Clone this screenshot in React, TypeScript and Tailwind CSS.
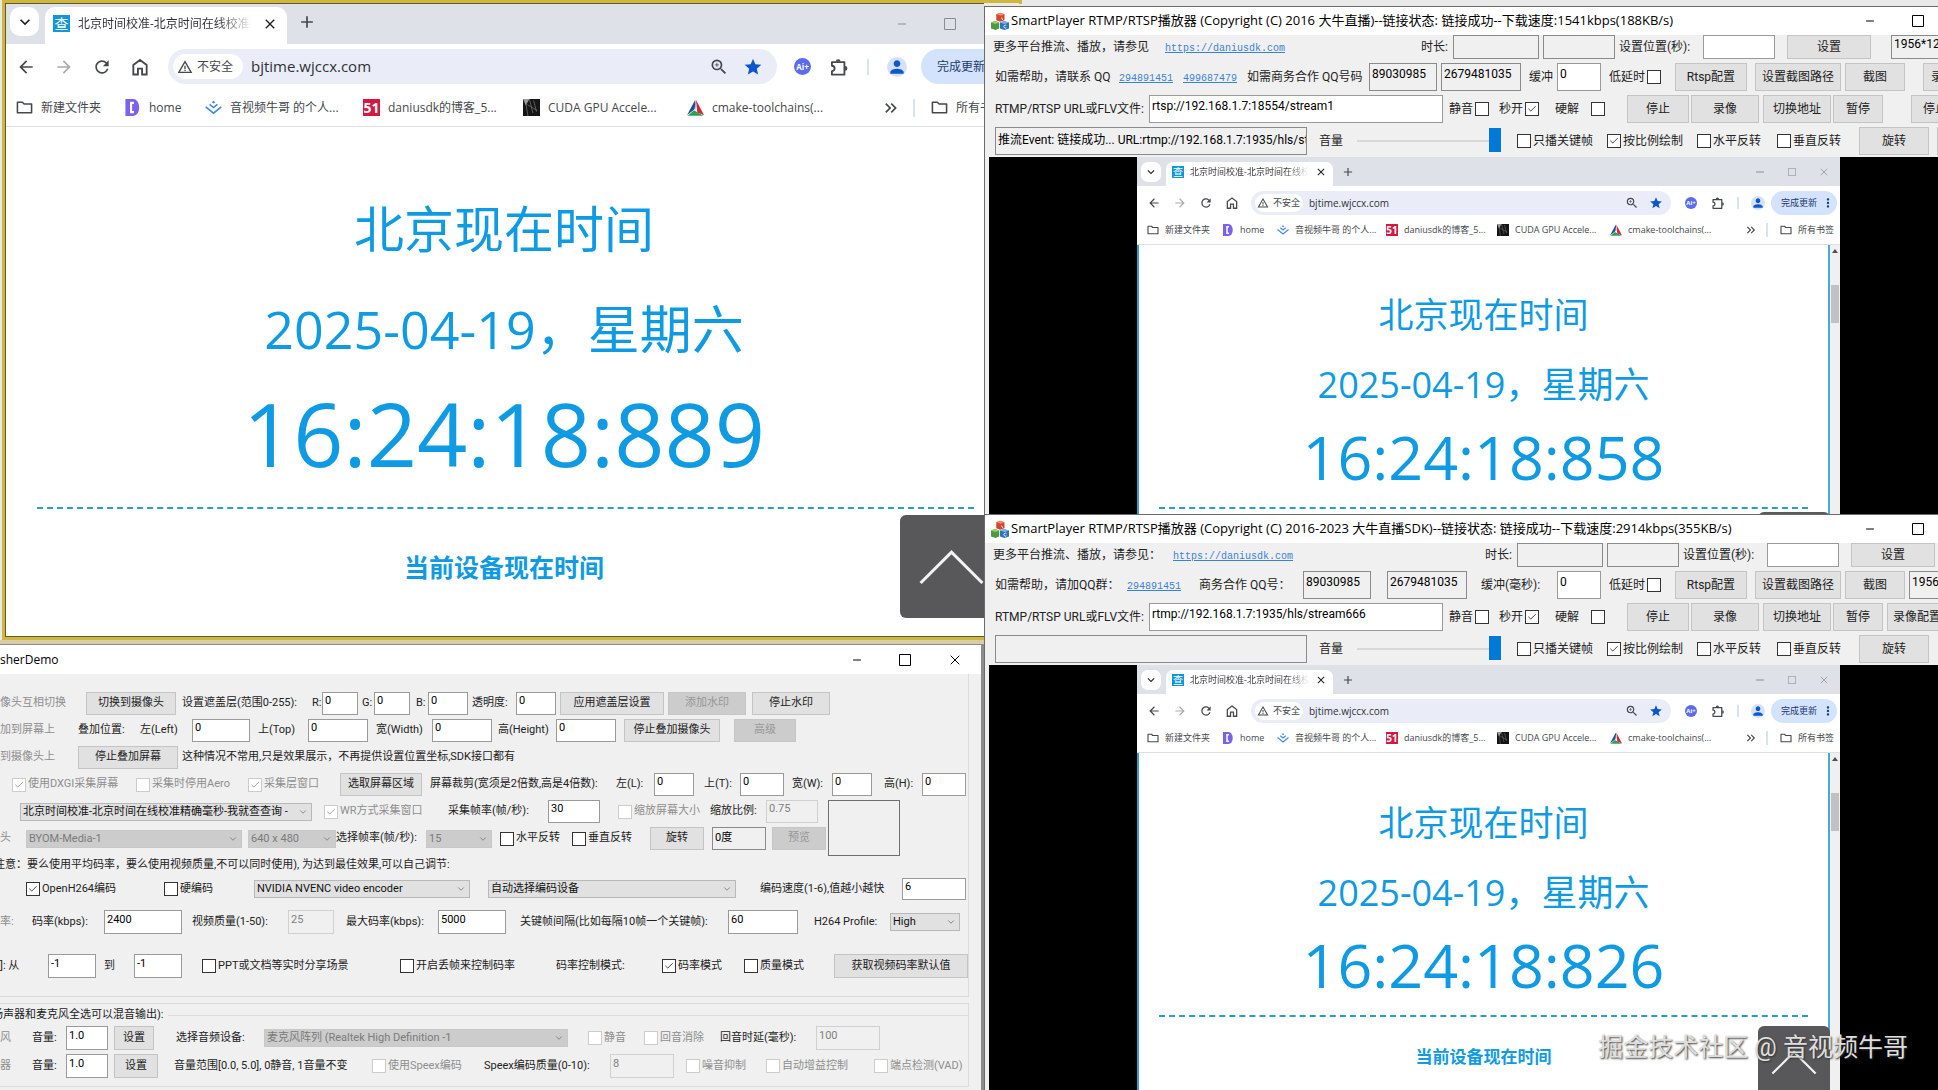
import type { ReactNode } from "react";
import clsx from "clsx";
import { Check, ChevronDown, Minus, X } from "lucide-react";
import {
  MdAdd,
  MdArrowBack,
  MdArrowForward,
  MdClose,
  MdKeyboardArrowDown,
  MdKeyboardDoubleArrowRight,
  MdMoreVert,
  MdPerson,
  MdRefresh,
  MdStar,
  MdWarningAmber,
  MdZoomIn,
} from "react-icons/md";

/* ---------- icons ---------- */

function MaxIcon({ className }: { className?: string }) {
  return (
    <svg className={className} viewBox="0 0 12 12" fill="none" stroke="currentColor">
      <path d="M.5.5h11v11H.5z" />
    </svg>
  );
}

function HomeIcon({ className }: { className?: string }) {
  return (
    <svg className={className} viewBox="0 0 24 24" fill="none" stroke="currentColor" strokeWidth={2.2}>
      <path d="M4 21V9.5L12 3.5l8 6V21h-5.5v-7h-5v7z" />
    </svg>
  );
}

function ExtensionIcon({ className }: { className?: string }) {
  return (
    <svg className={className} viewBox="0 0 24 24" fill="none" stroke="currentColor" strokeWidth={2.2}>
      <path d="M3.5 6.2h15v15h-15v-4.3a3.2 3.2 0 0 0 0-6.4z" strokeLinejoin="round" />
      <path d="M8.2 5.4a2.8 2.8 0 0 1 5.6 0zM19.3 10.9a2.8 2.8 0 0 1 0 5.6z" fill="currentColor" stroke="none" />
    </svg>
  );
}

function FolderIcon({ className }: { className?: string }) {
  return (
    <svg className={className} viewBox="0 0 24 24" fill="none" stroke="currentColor" strokeWidth={2.2}>
      <path d="M2 19.5v-15h7l2.5 2.5H22v12.5z" strokeLinejoin="round" />
    </svg>
  );
}

function PurpleIcon({ className }: { className?: string }) {
  return (
    <svg className={className} viewBox="0 0 24 24">
      <path d="M2 0h11a8.5 12 0 0 1 0 24H2z" fill="#7b61f0" />
      <path d="M14 5.5h-4v13h4" fill="none" stroke="#fff" strokeWidth={3} />
    </svg>
  );
}

function JuejinIcon({ className }: { className?: string }) {
  return (
    <svg className={className} viewBox="0 0 24 24" fill="none" stroke="#3f86f7" strokeWidth={2.2}>
      <path d="M12 2.5l2.5 2-2.5 2-2.5-2z" fill="#3f86f7" stroke="none" />
      <path d="M6.5 7.5L12 12l5.5-4.5M1 11l11 9 11-9" />
    </svg>
  );
}

function CmakeIcon({ className }: { className?: string }) {
  return (
    <svg className={className} viewBox="0 0 24 24">
      <path d="M11.6 1L0 23l12.5-10z" fill="#1f4f9c" />
      <path d="M12.6 1L24 23l-9.5-4z" fill="#d0283a" />
      <path d="M1 23.5l9-7.5 13 7.5z" fill="#2f9e4f" />
      <path d="M11.9 6l.6 8.5 2.5 3-4.5-1.5z" fill="#dfe6ee" />
    </svg>
  );
}

function CudaIcon({ className }: { className?: string }) {
  return (
    <svg className={className} viewBox="0 0 24 24">
      <path d="M0 0h24v24H0z" fill="#151515" />
      <path d="M3 0l4 24M9 0l5 20M15 2l4 16M6 8l14 8" stroke="#777" strokeWidth={1} />
      <path d="M0 0h9L4 9z" fill="#9a9a9a" />
    </svg>
  );
}

function MfcIcon() {
  return (
    <svg className="size-4.5 shrink-0" viewBox="0 0 24 24">
      <path d="M7 3l5-2 6 2v8l-6 2-5-2z" fill="#d4472f" />
      <path d="M12 1l6 2-5 2-6-2z" fill="#f08a6c" />
      <path d="M0 14l5-2 6 2v8l-5 2-6-2z" fill="#4f9a3c" />
      <path d="M5 12l6 2-5 2-6-2z" fill="#93cf74" />
      <path d="M12 14l5-2 7 2v8l-6 2-6-2z" fill="#2e72b8" />
      <path d="M17 12l7 2-6 2-6-2z" fill="#7fb4e6" />
      <path d="M14 7.5l1.5 3M20.5 18a2 2 0 1 0 0 3" stroke="#fff" fill="none" strokeWidth={1.2} />
    </svg>
  );
}

/* ---------- browser window ---------- */

const BIG = {
  strip: "h-10 pl-1 pt-[3px]",
  menu: "size-[29px] rounded-[10px]",
  menuIcon: "size-5",
  tab: "ml-1.5 w-[242px] rounded-t-[10px] pl-2 pr-2 pb-1",
  fav: "size-[17px] text-[14px]",
  title: "ml-2 w-[174px] text-[12px]",
  tabClose: "ml-2.5 size-4",
  plus: "ml-2.5 size-5 mt-[5px]",
  controls: "w-[60px] right-[62px]",
  controlIcon: "size-3",
  bar: "h-[45px] pl-2.5",
  nav: "size-5 mr-[18px]",
  omni: "h-[35px] w-[609px] pl-[5px] pr-3.5",
  chip: "h-[25px] w-[70px] pl-1 gap-1 text-[12px]",
  chipIcon: "size-4",
  url: "ml-2 text-[15px]",
  omniIcon: "size-5",
  omniGap: "gap-3.5",
  ai: "ml-[17px] size-[17px] text-[8px]",
  ext: "ml-4.5 size-5",
  rule: "ml-4.5 h-4",
  person: "ml-4.5 size-5",
  pill: "ml-3.5 h-[35px] w-[94px] pl-4 text-[12px]",
  dots: "size-4",
  marks: "h-[38px] pl-2.5 text-[12px]",
  markIcon: "size-[17px]",
  mark: "gap-2 mr-[21px]",
  more: "size-5 ml-7",
  all: "ml-3 pl-4 gap-2",
  h1: "pt-[70px] text-[50px] leading-[64px]",
  date: "mt-9 text-[52px] leading-[64px]",
  time: "mt-6 text-[88px] leading-[96px]",
  dash: "mt-[26px] ml-[31px] mr-7",
  h2: "mt-[42px] text-[25px] leading-8",
};

const SMALL: typeof BIG = {
  strip: "h-[29px] pl-1 pt-[5px]",
  menu: "size-5 rounded-[7px]",
  menuIcon: "size-3.5",
  tab: "ml-[5px] w-[167px] rounded-t-[7px] pl-1.5 pr-1.5 pb-1",
  fav: "size-3 text-[10px]",
  title: "ml-1.5 w-[119px] text-[9px]",
  tabClose: "ml-1.5 size-3",
  plus: "ml-2 size-3.5 mt-[3px]",
  controls: "w-[76px] right-2.5",
  controlIcon: "size-2",
  bar: "h-8 pl-2.5 pt-0.5",
  nav: "size-3.5 mr-3",
  omni: "h-6 w-[420px] pl-1 pr-2",
  chip: "h-[18px] w-12 pl-0.5 gap-1 text-[9px]",
  chipIcon: "size-3",
  url: "ml-1.5 text-[10px]",
  omniIcon: "size-3.5",
  omniGap: "gap-2.5",
  ai: "ml-3.5 size-3 text-[6px]",
  ext: "ml-3.5 size-3.5",
  rule: "ml-3 h-3",
  person: "ml-3 size-3.5",
  pill: "ml-1.5 h-6 w-[66px] pl-2.5 text-[9px]",
  dots: "size-3.5",
  marks: "h-[27px] pl-2.5 pb-0.5 text-[9px]",
  markIcon: "size-3",
  mark: "gap-1.5 mr-[13px]",
  more: "size-3.5 ml-5",
  all: "ml-2 pl-3 gap-1.5",
  h1: "pt-12 text-[35px] leading-[44px]",
  date: "mt-6.5 text-[36px] leading-[44px]",
  time: "mt-4 text-[61px] leading-[68px]",
  dash: "mt-4 ml-5 mr-5",
  h2: "mt-7 text-[17px] leading-6",
};

const bookmarks = [
  { name: "新建文件夹", Icon: FolderIcon, big: "w-[62px]", small: "w-11" },
  { name: "home", Icon: PurpleIcon, big: "w-[35px]", small: "w-6" },
  { name: "音视频牛哥 的个人...", Icon: JuejinIcon, big: "w-[112px]", small: "w-[78px]" },
  { name: "daniusdk的博客_5...", Icon: null, big: "w-[114px]", small: "w-[80px]" },
  { name: "CUDA GPU Accele...", Icon: CudaIcon, big: "w-[118px]", small: "w-[82px]" },
  { name: "cmake-toolchains(...", Icon: CmakeIcon, big: "w-[120px]", small: "w-[83px]" },
];

function Browser({ small = false, time, children }: { small?: boolean; time: string; children?: ReactNode }) {
  const s = small ? SMALL : BIG;
  return (
    <div
      className={clsx(
        "relative flex shrink-0 flex-col overflow-hidden bg-white font-['Open_Sans','Noto_Sans_CJK_SC',sans-serif] text-[#45484c]",
        small ? "w-[703px]" : "w-[1012px]",
      )}
    >
      <div className={clsx("relative flex shrink-0 items-start bg-[#dee2e8]", s.strip)}>
        <button aria-label="搜索标签页" className={clsx("flex items-center justify-center bg-white text-[#1f1f1f]", s.menu)}>
          <MdKeyboardArrowDown className={s.menuIcon} />
        </button>
        <div className={clsx("flex h-full items-center bg-white", s.tab)}>
          <span className={clsx("flex shrink-0 items-center justify-center bg-[#1296db] leading-none text-white", s.fav)}>查</span>
          <span
            className={clsx(
              "shrink-0 overflow-hidden bg-linear-to-r from-[#303236] from-80% to-white bg-clip-text whitespace-nowrap text-transparent",
              s.title,
            )}
          >
            北京时间校准-北京时间在线校准
          </span>
          <button aria-label="关闭标签页" className="text-[#1f1f1f]">
            <MdClose className={s.tabClose} />
          </button>
        </div>
        <button aria-label="新标签页">
          <MdAdd className={s.plus} />
        </button>
        <div className={clsx("absolute inset-y-0 flex items-center justify-between text-[#8a8d92]", s.controls)}>
          <Minus className="size-3" strokeWidth={2} />
          <MaxIcon className={s.controlIcon} />
          {small && <X className="size-3" strokeWidth={1.5} />}
        </div>
      </div>

      <div className={clsx("flex shrink-0 items-center", s.bar)}>
        <button aria-label="后退"><MdArrowBack className={s.nav} /></button>
        <button aria-label="前进" className="text-[#a9abae]"><MdArrowForward className={s.nav} /></button>
        <button aria-label="刷新"><MdRefresh className={s.nav} /></button>
        <button aria-label="主页"><HomeIcon className={s.nav} /></button>
        <div className={clsx("flex shrink-0 items-center rounded-full bg-[#eaedf8]", s.omni)}>
          <span className={clsx("flex shrink-0 items-center rounded-full bg-white whitespace-nowrap", s.chip)}>
            <MdWarningAmber className={s.chipIcon} />
            不安全
          </span>
          <input
            aria-label="地址栏"
            defaultValue="bjtime.wjccx.com"
            className={clsx("min-w-0 flex-1 bg-transparent text-[#303236] outline-none", s.url)}
          />
          <span className={clsx("flex items-center", s.omniGap)}>
            <MdZoomIn className={s.omniIcon} />
            <MdStar className={clsx("text-[#0b57d0]", s.omniIcon)} />
          </span>
        </div>
        <span className={clsx("flex shrink-0 items-center justify-center rounded-full bg-[#5a6cf0] font-bold text-white", s.ai)}>Ai+</span>
        <ExtensionIcon className={clsx("shrink-0", s.ext)} />
        <span className={clsx("w-0.5 shrink-0 bg-[#d6e2fb]", s.rule)} />
        <span className={clsx("flex shrink-0 items-center justify-center rounded-full bg-[#d6e2fb] text-[#0b57d0]", s.person)}>
          <MdPerson className="size-full" />
        </span>
        <button className={clsx("flex shrink-0 items-center gap-1 rounded-full bg-[#d3e3fd] whitespace-nowrap text-[#1c3a6e]", s.pill)}>
          完成更新
          <MdMoreVert className={clsx("shrink-0", s.dots)} />
        </button>
      </div>

      <div className={clsx("flex shrink-0 items-center border-b border-[#dcdfe3] whitespace-nowrap", s.marks)}>
        {bookmarks.map(({ name, Icon, ...w }) => (
          <a key={name} href="#" className={clsx("flex shrink-0 items-center", s.mark)}>
            {Icon ? (
              <Icon className={clsx("shrink-0", s.markIcon)} />
            ) : (
              <span className={clsx("flex shrink-0 items-center justify-center bg-[#d6173f] font-bold text-white", s.fav)}>51</span>
            )}
            <span className={small ? w.small : w.big}>{name}</span>
          </a>
        ))}
        <MdKeyboardDoubleArrowRight className={clsx("shrink-0", s.more)} />
        <a href="#" className={clsx("flex items-center border-l-2 border-[#d6e2fb]", s.all)}>
          <FolderIcon className={clsx("shrink-0", s.markIcon)} />
          所有书签
        </a>
      </div>

      <div className={clsx("flex min-h-0 flex-1", small && "border-l-2 border-[#2f9fd0]")}>
        <main className={clsx("flex-1 text-center whitespace-nowrap text-[#0f9be4]", small ? "border-r-2 border-[#4aa8d8]" : "mr-4")}>
          <h1 className={s.h1}>北京现在时间</h1>
          <p className={s.date}>2025-04-19，星期六</p>
          <p className={s.time}>{time}</p>
          <div className={clsx("border-t-2 border-dashed border-[#28a0c4]", s.dash)} />
          <h2 className={clsx("font-bold", s.h2)}>当前设备现在时间</h2>
        </main>
        {small && (
          <div className="flex w-2.5 flex-col items-center bg-[#f0f0f0] pt-1">
            <svg className="h-1 w-1.5" viewBox="0 0 6 4"><path d="M3 0l3 4H0z" fill="#505050" /></svg>
            <div className="mt-8 h-9.5 w-2 bg-[#c1c1c1]" />
          </div>
        )}
      </div>
      {children}
    </div>
  );
}

function BackToTop({ className }: { className: string }) {
  return (
    <button aria-label="返回顶部" className={clsx("absolute rounded-md bg-[#58585a]", className)}>
      <svg className="size-full" viewBox="0 0 100 100" fill="none" stroke="#f2f2f2" strokeWidth={3}>
        <path d="M20 66l30-30 30 30" />
      </svg>
    </button>
  );
}

/* ---------- dialog controls ---------- */

function Label({ w, dim, children }: { w?: string; dim?: boolean; children: ReactNode }) {
  return <span className={clsx("shrink-0", dim ? "text-[#8e8e8e]" : "text-[#222]", w)}>{children}</span>;
}

function Btn({ w, disabled, children }: { w: string; disabled?: boolean; children?: ReactNode }) {
  return (
    <button
      disabled={disabled}
      className={clsx(
        "h-full shrink-0 border text-center",
        disabled ? "border-[#c6c6c6] bg-[#cccccc] text-[#979797]" : "border-[#c4c4c4] bg-[#e1e1e1] text-[#222]",
        w,
      )}
    >
      {children}
    </button>
  );
}

function Field({ w, value = "", name, tone = "edit" }: { w: string; value?: string; name: string; tone?: "edit" | "readonly" | "off" }) {
  return (
    <input
      aria-label={name}
      defaultValue={value}
      readOnly={tone === "readonly"}
      disabled={tone === "off"}
      className={clsx(
        "h-full shrink-0 border pb-1.5 pl-0.5 outline-none",
        tone === "edit" && "border-[#9a9a9a] bg-white text-black",
        tone === "readonly" && "border-[#8a8a8a] bg-[#f0f0f0] text-black",
        tone === "off" && "border-[#d0d0d0] bg-[#f0f0f0] text-[#808080]",
        w,
      )}
    />
  );
}

function Tick({ w, on, off, before, text }: { w?: string; on?: boolean; off?: boolean; before?: string; text: string }) {
  return (
    <label className={clsx("flex shrink-0 items-center", off ? "text-[#8e8e8e]" : "text-[#222]", w)}>
      {before && <span className={before}>{text}</span>}
      <span className="relative size-3.5 shrink-0">
        <input
          type="checkbox"
          defaultChecked={on}
          disabled={off}
          className={clsx("block size-3.5 appearance-none border bg-white", off ? "border-[#cccccc]" : "border-[#333]")}
        />
        {on && <Check className="pointer-events-none absolute inset-0.5 size-2.5" strokeWidth={2} />}
      </span>
      {!before && <span className="ml-0.5">{text}</span>}
    </label>
  );
}

function Pick({ w, value, name, off }: { w: string; value: string; name: string; off?: boolean }) {
  return (
    <span className={clsx("relative flex h-4.5 shrink-0", w)}>
      <select
        aria-label={name}
        disabled={off}
        className={clsx(
          "size-full appearance-none border px-0.5",
          off ? "border-[#c8c8c8] bg-[#cccccc] text-[#7b7b7b]" : "border-[#b8b8b8] bg-[#e1e1e1] text-[#111]",
        )}
      >
        <option>{value}</option>
      </select>
      <ChevronDown className="pointer-events-none absolute top-1 right-1 size-2.5 text-[#777]" />
    </span>
  );
}

function Link({ w, children }: { w: string; children: ReactNode }) {
  return (
    <span className={clsx("shrink-0", w)}>
      <a href="#" className="font-['Liberation_Mono',monospace] text-[10px] text-[#3a82d8] underline">{children}</a>
    </span>
  );
}

/* ---------- player windows ---------- */

function Player({ title, first, time, children }: { title: string; first?: boolean; time: string; children?: ReactNode }) {
  return (
    <section className="flex min-h-0 flex-col overflow-hidden border-t border-l border-[#6b6b6b] bg-[#f0f0f0]">
      <header className="flex h-7 shrink-0 items-center bg-white pl-1.5 font-['Open_Sans','Noto_Sans_CJK_SC',sans-serif] text-[13px] text-black">
        <MfcIcon />
        <span className="ml-0.5 flex-1 whitespace-nowrap">{title}</span>
        <Minus className="mr-9 size-3" strokeWidth={2} />
        <MaxIcon className="mr-3.5 size-3" />
      </header>
      <div className="flex shrink-0 flex-col gap-1 pb-0.5 text-[12px] whitespace-nowrap">
        <div className="flex h-6 items-center pl-2">
          <Label w={first ? "w-43" : "w-45"}>{first ? "更多平台推流、播放，请参见" : "更多平台推流、播放，请参见："}</Label>
          <Link w={first ? "w-64" : "w-78"}>https://daniusdk.com</Link>
          <Label w="w-8">时长:</Label>
          <Field w="w-21.5" name="时长" tone="readonly" />
          <Field w="ml-1 w-18" name="总时长" tone="readonly" />
          <Label w="ml-1 w-21">设置位置(秒):</Label>
          <Field w="w-18" name="设置位置" />
          <Btn w="ml-3 w-21">设置</Btn>
          {first && <Field w="ml-5 w-20" name="分辨率" value="1956*1260" tone="readonly" />}
        </div>
        <div className="flex h-7 items-center pl-2.5">
          {first ? (
            <>
              <Label w="w-31">如需帮助，请联系 QQ</Label>
              <Link w="w-16">294891451</Link>
              <Link w="w-16">499687479</Link>
              <Label w="w-30.5">如需商务合作 QQ号码</Label>
              <Field w="w-17" name="QQ号码" value="89030985" tone="readonly" />
              <Field w="ml-1 w-20" name="QQ号码" value="2679481035" tone="readonly" />
              <Label w="ml-2 w-7">缓冲</Label>
            </>
          ) : (
            <>
              <Label w="w-33">如需帮助，请加QQ群：</Label>
              <Link w="w-18">294891451</Link>
              <Label w="w-26">商务合作 QQ号：</Label>
              <Field w="w-17" name="QQ号" value="89030985" tone="readonly" />
              <Field w="ml-4 w-20" name="QQ号" value="2679481035" tone="readonly" />
              <Label w="ml-3.5 w-19">缓冲(毫秒):</Label>
            </>
          )}
          <Field w="w-11" name="缓冲" value="0" />
          <Tick w="ml-2" before="w-9.5" text="低延时" />
          <Btn w="ml-3.5 w-18">Rtsp配置</Btn>
          <Btn w="ml-2 w-21.5">设置截图路径</Btn>
          <Btn w="ml-1 w-15">截图</Btn>
          {first ? <Btn w="ml-4.5 w-10">录像</Btn> : <Field w="ml-1 w-20" name="分辨率" value="1956*1260" tone="readonly" />}
        </div>
        <div className="flex h-7 items-center pl-2.5">
          <Label w="w-38.5">RTMP/RTSP URL或FLV文件:</Label>
          <Field
            w="w-73.5"
            name="播放地址"
            value={first ? "rtsp://192.168.1.7:18554/stream1" : "rtmp://192.168.1.7:1935/hls/stream666"}
          />
          <Tick w="ml-1.5" before="w-6.5" text="静音" />
          <Tick w="ml-2.5" before="w-6.5" text="秒开" on />
          <Tick w="ml-4" before="w-9" text="硬解" />
          <Btn w="ml-5.5 w-15.5">停止</Btn>
          <Btn w="ml-0.5 w-17">录像</Btn>
          <Btn w="ml-1 w-17">切换地址</Btn>
          <Btn w="ml-0.5 w-12.5">暂停</Btn>
          {first ? <Btn w="ml-7 w-12">停止</Btn> : <Btn w="ml-1 w-15">录像配置</Btn>}
        </div>
        <div className="flex h-7 items-center pl-2.5">
          <Field
            w="w-78"
            name="事件"
            value={first ? "推流Event: 链接成功... URL:rtmp://192.168.1.7:1935/hls/stream666" : ""}
            tone="readonly"
          />
          <Label w="ml-3 w-9.5">音量</Label>
          <input
            type="range"
            aria-label="音量"
            defaultValue={100}
            className="h-6 w-36 shrink-0 appearance-none bg-transparent [&::-webkit-slider-runnable-track]:h-0.5 [&::-webkit-slider-runnable-track]:bg-[#d8d8d8] [&::-webkit-slider-thumb]:-mt-3 [&::-webkit-slider-thumb]:h-6 [&::-webkit-slider-thumb]:w-3 [&::-webkit-slider-thumb]:appearance-none [&::-webkit-slider-thumb]:bg-[#0078d7]"
          />
          <Tick w="ml-4 w-22.5" text="只播关键帧" />
          <Tick w="w-22.5" text="按比例绘制" on />
          <Tick w="w-20" text="水平反转" />
          <Tick w="w-20.5" text="垂直反转" />
          <Btn w="w-17.5">旋转</Btn>
          {first && <Btn w="ml-2 w-17" />}
        </div>
      </div>
      <div className="ml-1 flex min-h-0 flex-1 bg-black pl-37">
        <Browser small time={time}>
          {children}
        </Browser>
      </div>
    </section>
  );
}

/* ---------- publisher window ---------- */

function Row({ className, children }: { className?: string; children: ReactNode }) {
  return <div className={clsx("flex items-center", className)}>{children}</div>;
}

function Publisher() {
  return (
    <section className="flex min-h-0 flex-col overflow-hidden border-t border-r-3 border-[#8c8c8c] bg-[#f0f0f0]">
      <header className="flex h-[29px] shrink-0 items-center bg-white font-['Open_Sans','Noto_Sans_CJK_SC',sans-serif] text-[12px] text-black">
        <span className="flex-1">sherDemo</span>
        <Minus className="mr-9 size-3" strokeWidth={2} />
        <MaxIcon className="mr-9 size-3" />
        <X className="mr-4.5 size-4" strokeWidth={1.5} />
      </header>
      <div className="mr-3 shrink-0 border-r border-b border-[#dcdcdc] pt-4 text-[11px] whitespace-nowrap">
        <Row className="h-[27px] py-0.5">
          <Label w="w-21.5" dim>像头互相切换</Label>
          <Btn w="w-22.5">切换到摄像头</Btn>
          <Label w="ml-1.5 w-32.5">设置遮盖层(范围0-255):</Label>
          <Label w="w-2.5">R:</Label>
          <Field w="w-9" name="R" value="0" />
          <Label w="ml-1 w-3">G:</Label>
          <Field w="w-9" name="G" value="0" />
          <Label w="ml-1.5 w-3">B:</Label>
          <Field w="w-10" name="B" value="0" />
          <Label w="ml-1 w-11">透明度:</Label>
          <Field w="w-10" name="透明度" value="0" />
          <Btn w="ml-1 w-26">应用遮盖层设置</Btn>
          <Btn w="ml-1 w-19.5" disabled>添加水印</Btn>
          <Btn w="ml-1.5 w-19.5">停止水印</Btn>
        </Row>
        <Row className="h-[27px] py-0.5">
          <Label w="w-19.5" dim>加到屏幕上</Label>
          <Label w="w-15.5">叠加位置:</Label>
          <Label w="w-13">左(Left)</Label>
          <Field w="w-14.5" name="左" value="0" />
          <Label w="ml-2 w-12.5">上(Top)</Label>
          <Field w="w-15" name="上" value="0" />
          <Label w="ml-2 w-14">宽(Width)</Label>
          <Field w="w-15" name="宽" value="0" />
          <Label w="ml-1.5 w-14.5">高(Height)</Label>
          <Field w="w-15" name="高" value="0" />
          <Btn w="ml-2 w-24">停止叠加摄像头</Btn>
          <Btn w="ml-3.5 w-15.5" disabled>高级</Btn>
        </Row>
        <Row className="h-[27px] py-0.5">
          <Label w="w-19.5" dim>到摄像头上</Label>
          <Btn w="w-25">停止叠加屏幕</Btn>
          <Label w="ml-1">这种情况不常用,只是效果展示，不再提供设置位置坐标,SDK接口都有</Label>
        </Row>
        <Row className="h-[27px] py-0.5 pl-3">
          <Tick w="w-31" text="使用DXGI采集屏幕" on off />
          <Tick w="w-28" text="采集时停用Aero" off />
          <Tick w="w-23" text="采集层窗口" on off />
          <Btn w="w-20.5">选取屏幕区域</Btn>
          <Label w="ml-2 w-46.5">屏幕裁剪(宽须是2倍数,高是4倍数):</Label>
          <Label w="w-9.5">左(L):</Label>
          <Field w="w-10" name="左(L)" value="0" />
          <Label w="ml-2.5 w-9">上(T):</Label>
          <Field w="w-11" name="上(T)" value="0" />
          <Label w="ml-2 w-10">宽(W):</Label>
          <Field w="w-10" name="宽(W)" value="0" />
          <Label w="ml-3 w-9.5">高(H):</Label>
          <Field w="w-11" name="高(H)" value="0" />
        </Row>
        <Row className="h-[27px] py-0.5 pl-5">
          <Pick w="w-73" name="窗口" value="北京时间校准-北京时间在线校准精确毫秒-我就查查询 -" />
          <Tick w="ml-3 w-31" text="WR方式采集窗口" on off />
          <Label w="w-25">采集帧率(帧/秒):</Label>
          <Field w="w-13" name="采集帧率" value="30" />
          <Tick w="ml-4.5 w-23" text="缩放屏幕大小" off />
          <Label w="w-14">缩放比例:</Label>
          <Field w="w-13" name="缩放比例" value="0.75" tone="off" />
          <span className="ml-2.5 h-14 w-18 shrink-0 self-start border border-[#6f6f6f]" />
        </Row>
        <Row className="h-[27px] py-0.5">
          <Label w="w-6.5" dim>头</Label>
          <Pick w="w-54" name="摄像头" value="BYOM-Media-1" off />
          <Pick w="ml-1.5 w-22" name="分辨率" value="640 x 480" off />
          <Label w="w-22.5">选择帧率(帧/秒):</Label>
          <Pick w="w-16.5" name="选择帧率" value="15" off />
          <Tick w="ml-2 w-18" text="水平反转" />
          <Tick w="w-19.5" text="垂直反转" />
          <Btn w="w-13.5">旋转</Btn>
          <Field w="ml-2 w-13.5" name="旋转角度" value="0度" tone="readonly" />
          <Btn w="ml-1.5 w-13.5" disabled>预览</Btn>
        </Row>
        <Row className="h-6.5">
          <Label w="-ml-1.5">注意：要么使用平均码率，要么使用视频质量,不可以同时使用), 为达到最佳效果,可以自己调节:</Label>
        </Row>
        <Row className="h-5.5 pl-6.5">
          <Tick w="w-34.5" text="OpenH264编码" on />
          <Tick w="w-22.5" text="硬编码" />
          <Pick w="w-54" name="编码器" value="NVIDIA NVENC video encoder" />
          <Pick w="ml-4.5 w-62" name="编码设备" value="自动选择编码设备" />
          <Label w="ml-6 w-35.5">编码速度(1-6),值越小越快</Label>
          <Field w="w-16" name="编码速度" value="6" />
        </Row>
        <Row className="mt-2.5 h-6">
          <Label w="w-8" dim>率:</Label>
          <Label w="w-18">码率(kbps):</Label>
          <Field w="w-19.5" name="码率" value="2400" />
          <Label w="ml-2.5 w-24">视频质量(1-50):</Label>
          <Field w="w-11.5" name="视频质量" value="25" tone="off" />
          <Label w="ml-3 w-23">最大码率(kbps):</Label>
          <Field w="w-17" name="最大码率" value="5000" />
          <Label w="ml-3.5 w-52">关键帧间隔(比如每隔10帧一个关键帧):</Label>
          <Field w="w-17.5" name="关键帧间隔" value="60" />
          <Label w="ml-4 w-19">H264 Profile:</Label>
          <Pick w="w-17.5" name="H264 Profile" value="High" />
        </Row>
        <Row className="mt-5 mb-4.5 h-6">
          <Label w="w-12">]: 从</Label>
          <Field w="w-12" name="从" value="-1" />
          <Label w="ml-2 w-7.5">到</Label>
          <Field w="w-12" name="到" value="-1" />
          <Tick w="ml-5 w-49.5" text="PPT或文档等实时分享场景" />
          <Tick w="w-39" text="开启丢帧来控制码率" />
          <Label w="w-26.5">码率控制模式:</Label>
          <Tick w="w-20.5" text="码率模式" on />
          <Tick w="w-22.5" text="质量模式" />
          <Btn w="w-33.5">获取视频码率默认值</Btn>
        </Row>
      </div>
      <div className="mt-1.5 mr-3 shrink-0 border-t border-r border-b border-[#dcdcdc] pb-2 text-[11px] whitespace-nowrap">
        <Row className="h-5.5">
          <Label w="-ml-2 mr-1">扬声器和麦克风全选可以混音输出):</Label>
          <span className="h-px flex-1 bg-[#dcdcdc]" />
        </Row>
        <Row className="h-6">
          <Label w="w-8" dim>风</Label>
          <Label w="w-8.5">音量:</Label>
          <Field w="w-10.5" name="麦克风音量" value="1.0" />
          <Btn w="ml-1.5 w-10">设置</Btn>
          <Label w="ml-5.5 w-22">选择音频设备:</Label>
          <Pick w="w-76" name="音频设备" value="麦克风阵列 (Realtek High Definition -1" off />
          <Tick w="ml-5 w-14" text="静音" off />
          <Tick w="w-19" text="回音消除" off />
          <Label w="w-24">回音时延(毫秒):</Label>
          <Field w="w-16" name="回音时延" value="100" tone="off" />
        </Row>
        <Row className="mt-1 h-6">
          <Label w="w-8" dim>器</Label>
          <Label w="w-8.5">音量:</Label>
          <Field w="w-10.5" name="扬声器音量" value="1.0" />
          <Btn w="ml-1.5 w-11">设置</Btn>
          <Label w="ml-4 w-49.5">音量范围[0.0, 5.0], 0静音, 1音量不变</Label>
          <Tick w="w-28" text="使用Speex编码" off />
          <Label w="w-31.5">Speex编码质量(0-10):</Label>
          <Field w="w-16" name="Speex编码质量" value="8" tone="off" />
          <Tick w="ml-3 w-20" text="噪音抑制" off />
          <Tick w="w-27" text="自动增益控制" off />
          <Tick text="端点检测(VAD)" off />
        </Row>
      </div>
    </section>
  );
}

export default function App() {
  return (
    <div className="relative grid h-screen grid-cols-[984fr_954fr] grid-rows-[minmax(0,1fr)] overflow-hidden bg-[#e9e9ea] font-['Roboto','Noto_Sans_CJK_SC',sans-serif]">
      <div className="grid min-h-0 min-w-0 grid-rows-[minmax(0,644fr)_minmax(0,446fr)]">
        <div className="relative flex min-h-0 overflow-hidden border-b-4 border-[#d9cda8] pl-0.5">
          <div className="flex min-w-0 flex-1 overflow-hidden border-y-3 border-l-3 border-[#cfb63f]">
            <div className="flex min-w-0 flex-1 overflow-hidden border-y border-l border-[#5f5a2c]">
              <Browser time="16:24:18:889" />
            </div>
          </div>
          <BackToTop className="right-[-19px] bottom-[22px] size-[103px]" />
        </div>
        <Publisher />
      </div>

      <div className="grid min-h-0 min-w-0 grid-rows-[6px_minmax(0,508fr)_minmax(0,576fr)]">
        <div className="h-1 w-9.5 border-t-3 border-r-3 border-[#cfb63f]" />
        <Player
          first
          title="SmartPlayer RTMP/RTSP播放器 (Copyright (C) 2016 大牛直播)--链接状态: 链接成功--下载速度:1541kbps(188KB/s)"
          time="16:24:18:858"
        >
          <BackToTop className="right-2.5 bottom-[-70px] size-[72px]" />
        </Player>
        <Player
          title="SmartPlayer RTMP/RTSP播放器 (Copyright (C) 2016-2023 大牛直播SDK)--链接状态: 链接成功--下载速度:2914kbps(355KB/s)"
          time="16:24:18:826"
        >
          <BackToTop className="right-2.5 -bottom-2 size-[72px]" />
        </Player>
      </div>

      <p className="absolute right-7.5 bottom-6 text-[25px] leading-9 text-[#dedede] [text-shadow:1px_1px_2px_#333]">掘金技术社区 @ 音视频牛哥</p>
    </div>
  );
}
